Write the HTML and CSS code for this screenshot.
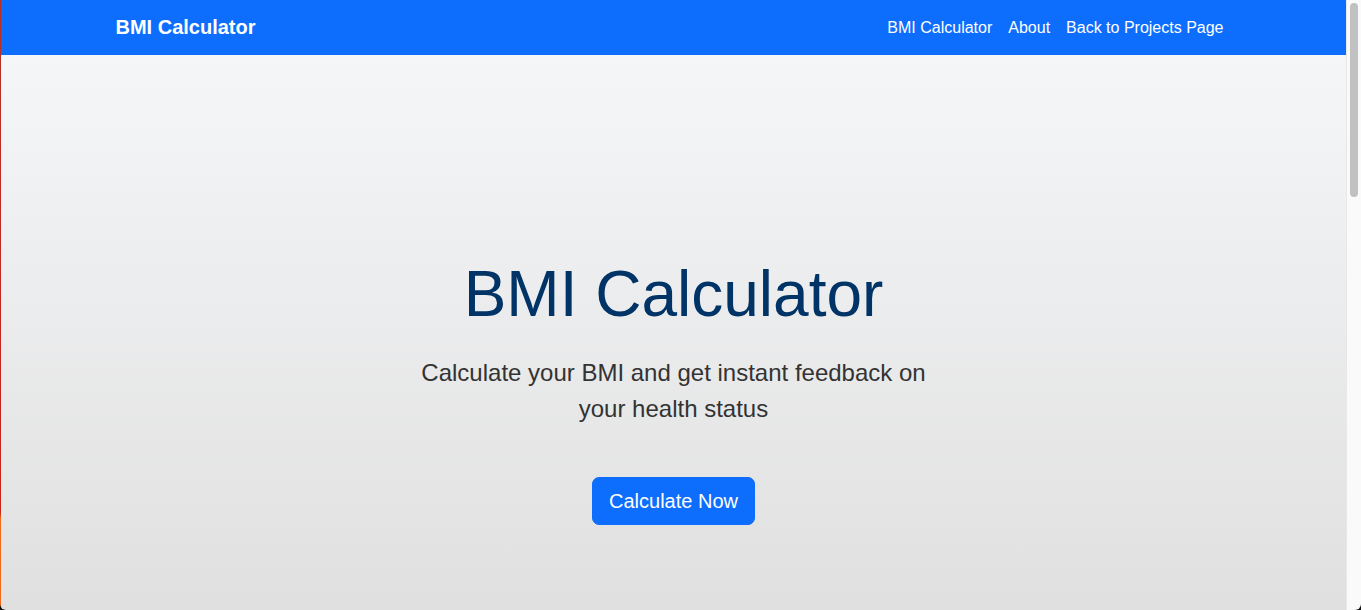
FILE: index.html
```html
<!DOCTYPE html>
<html lang="en">
<head>
<meta charset="utf-8">
<title>BMI Calculator</title>
<link rel="stylesheet" href="styles.css">
</head>
<body>
<div class="window">
  <div class="edge"></div>
  <div class="page">
    <nav class="navbar">
      <div class="container nav-inner">
        <a class="brand" href="#">BMI Calculator</a>
        <ul class="nav-links">
          <li><a href="#">BMI Calculator</a></li>
          <li><a href="#">About</a></li>
          <li><a href="#">Back to Projects Page</a></li>
        </ul>
      </div>
    </nav>
    <section class="hero">
      <h1 class="hero-title">BMI Calculator</h1>
      <p class="hero-lead">Calculate your BMI and get instant feedback on your health status</p>
      <a class="btn-primary" href="#">Calculate Now</a>
    </section>
  </div>
  <div class="scrollbar"><div class="thumb"></div></div>
</div>
</body>
</html>
```

FILE: styles.css
```css
* { box-sizing: border-box; }
html, body { margin: 0; padding: 0; height: 610px; overflow: hidden; }
body {
  background: #111;
  font-family: "Liberation Sans", Arial, Helvetica, sans-serif;
}
.window {
  display: flex;
  height: 610px;
  border-radius: 0 0 6px 6px;
  overflow: hidden;
}
.edge {
  width: 1px;
  flex: none;
  background: linear-gradient(180deg, #b8302a 0%, #c8261c 84%, #f06a1a 85%, #f26a1a 100%);
}
.page {
  flex: 1;
  display: flex;
  flex-direction: column;
  min-width: 0;
}
.navbar {
  height: 55px;
  flex: none;
  background: #0d6efd;
  display: flex;
  align-items: center;
}
.container {
  width: 100%;
  max-width: 1140px;
  margin: 0 auto;
  padding: 0 12px;
}
.nav-inner {
  display: flex;
  align-items: center;
  justify-content: space-between;
}
.brand {
  color: #fff;
  font-weight: 700;
  font-size: 20px;
  line-height: 30px;
  text-decoration: none;
  margin-top: -1px;
}
.nav-links {
  list-style: none;
  display: flex;
  margin: 0;
  padding: 0;
}
.nav-links a {
  display: block;
  padding: 8px;
  color: #fff;
  font-size: 16px;
  line-height: 24px;
  text-decoration: none;
}
.hero {
  flex: 1;
  background: linear-gradient(180deg, #f5f6f8 0%, #e0e0e0 100%);
  display: flex;
  flex-direction: column;
  align-items: center;
  text-align: center;
  padding-top: 201px;
}
.hero-title {
  margin: 0 0 22px;
  font-size: 64px;
  font-weight: 400;
  line-height: 1.2;
  color: #003366;
}
.hero-lead {
  margin: 0 0 50px;
  max-width: 546px;
  font-size: 24px;
  line-height: 36px;
  color: #333;
}
.btn-primary {
  display: inline-block;
  background: #0d6efd;
  color: #fff;
  border: 1px solid #0d6efd;
  border-radius: 7px;
  padding: 8px 16px;
  font-size: 20px;
  line-height: 30px;
  text-decoration: none;
}
.scrollbar {
  width: 15px;
  flex: none;
  background: #fafafa;
  border-left: 1px solid #e8e8e8;
  padding: 3px 3px 0 3px;
}
.thumb {
  width: 8px;
  height: 194px;
  border-radius: 4px;
  background: #c1c1c1;
}
```
